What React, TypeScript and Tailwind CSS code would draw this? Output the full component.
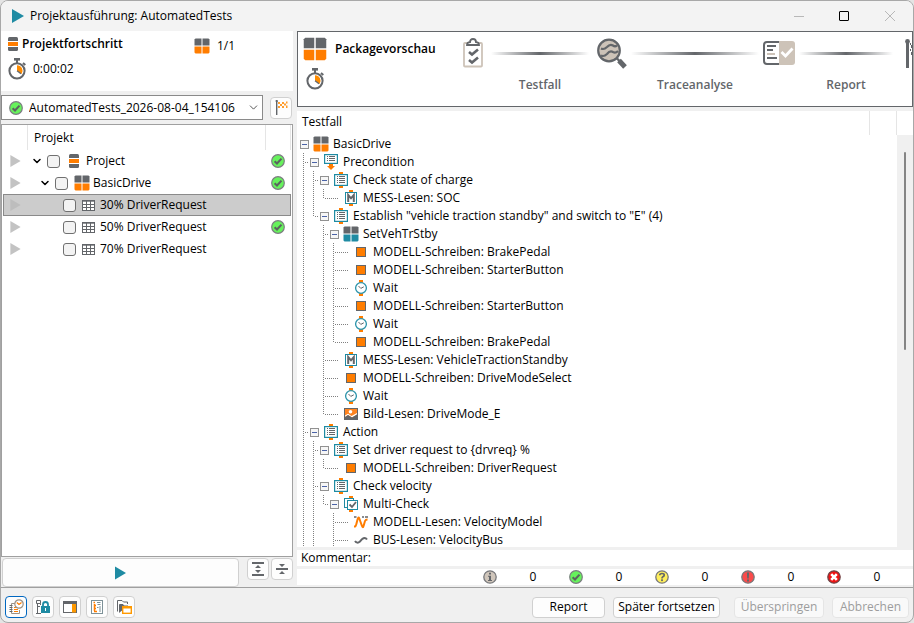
import type { ReactNode } from "react";
import { ChevronDown } from "lucide-react";

function PlayIcon({ className }: { className: string }) {
  return (
    <svg viewBox="0 0 12 14" className={className} fill="currentColor" aria-hidden="true">
      <path d="M0 0L12 7L0 14Z" />
    </svg>
  );
}

function PackageIcon({ className = "size-4", bottom = "#ff7d00" }: { className?: string; bottom?: string }) {
  return (
    <svg viewBox="0 0 16 16" className={`shrink-0 ${className}`} aria-hidden="true">
      <path d="M1.5 0.5H7.5V7.5H0.5V1.5Z" fill="#63666a" />
      <path d="M8.5 0.5H14.5L15.5 1.5V7.5H8.5Z" fill="#63666a" />
      <path d="M0.5 8.5H7.5V15.5H1.5L0.5 14.5Z" fill={bottom} />
      <path d="M8.5 8.5H15.5V14.5L14.5 15.5H8.5Z" fill={bottom} />
    </svg>
  );
}

function ProjectIcon({ className }: { className: string }) {
  return (
    <svg viewBox="0 0 10 14" className={`shrink-0 ${className}`} aria-hidden="true">
      <path d="M0 4V1.5Q0 0 1.5 0H8.5Q10 0 10 1.5V4Z" fill="#63666a" />
      <rect y="5" width="10" height="4" fill="#ff7d00" />
      <path d="M0 10H10V12.5Q10 14 8.5 14H1.5Q0 14 0 12.5Z" fill="#63666a" />
    </svg>
  );
}

function StopwatchIcon() {
  return (
    <svg viewBox="0 0 19 22" className="h-[22px] w-[19px] shrink-0" fill="none" aria-hidden="true">
      <rect x="6" y="0" width="6" height="2.6" fill="#63666a" />
      <path d="M9 2V5M15 5L17.3 7" stroke="#63666a" strokeWidth="2" />
      <circle cx="9" cy="12.8" r="7.6" stroke="#63666a" strokeWidth="2" fill="#fff" />
      <path d="M9 12.8V7.2A5.6 5.6 0 0 1 13.6 16Z" fill="#ff8c00" />
      <path d="M9 12.8L13 15.8" stroke="#63666a" strokeWidth="1.3" />
    </svg>
  );
}

function OkIcon() {
  return (
    <svg viewBox="0 0 14 14" className="size-3.5 shrink-0" fill="none" aria-hidden="true">
      <circle cx="7" cy="7" r="6.3" fill="#66f25c" stroke="#7b7d80" strokeWidth="1.2" />
      <path d="M3.6 7.2L6 9.5L10.5 4.6" stroke="#5b6360" strokeWidth="2.1" />
    </svg>
  );
}

function InfoIcon() {
  return (
    <svg viewBox="0 0 14 14" className="size-3.5 shrink-0" fill="none" aria-hidden="true">
      <circle cx="7" cy="7" r="6.2" fill="#d0c6bb" stroke="#77787b" strokeWidth="1.3" />
      <path d="M6 2.8H8V4.6H6ZM5 5.8H8V10H9V11H5V10H6V6.8H5Z" fill="#63666a" />
    </svg>
  );
}

function QuestionIcon() {
  return (
    <svg viewBox="0 0 14 14" className="size-3.5 shrink-0" fill="none" aria-hidden="true">
      <circle cx="7" cy="7" r="6.2" fill="#ffef5c" stroke="#77787b" strokeWidth="1.3" />
      <path d="M4.7 5.3Q4.8 3.5 7 3.5Q9.3 3.5 9.2 5.2Q9.1 6.3 7.9 6.8Q7 7.3 7 8.4" stroke="#63666a" strokeWidth="1.7" />
      <rect x="6.1" y="9.3" width="1.8" height="1.8" fill="#63666a" />
    </svg>
  );
}

function WarnIcon() {
  return (
    <svg viewBox="0 0 14 14" className="size-3.5 shrink-0" aria-hidden="true">
      <circle cx="7" cy="7" r="6.2" fill="#fa4b4b" stroke="#77787b" strokeWidth="1.3" />
      <path d="M5.9 2.6H8.1L7.8 8.4H6.2ZM6 9.4H8V11.4H6Z" fill="#63666a" />
    </svg>
  );
}

function ErrorIcon() {
  return (
    <svg viewBox="0 0 14 14" className="size-3.5 shrink-0" aria-hidden="true">
      <circle cx="7" cy="7" r="6.2" fill="#f01414" stroke="#6d4547" strokeWidth="1.3" />
      <path d="M4.2 4.2L9.8 9.8M9.8 4.2L4.2 9.8" stroke="#fff" strokeWidth="2.6" />
    </svg>
  );
}

function TableIcon() {
  return (
    <svg viewBox="0 0 13 11" className="mx-[3px] h-[11px] w-[13px] shrink-0" fill="none" aria-hidden="true">
      <rect x="0.5" y="0.5" width="12" height="10" fill="#fff" stroke="#63666a" />
      <path d="M0 1.2H13M0 4.5H13M0 7.5H13M4.5 1V11M8.5 1V11" stroke="#63666a" />
    </svg>
  );
}

function BlockIcon({ first = false }: { first?: boolean }) {
  if (first) {
    return (
      <svg viewBox="0 0 16 16" className="size-4 shrink-0" fill="none" aria-hidden="true">
        <rect x="1.6" y="0.6" width="12.8" height="8.8" fill="#fff" stroke="#1f8ba3" strokeWidth="1.2" />
        <path d="M4 2.5H5M6 2.5H12M4 4.5H5M6 4.5H12M4 6.5H5M6 6.5H12" stroke="#63666a" />
        <path d="M6 10H10V12H12L8 16L4 12H6Z" fill="#ff7d00" />
      </svg>
    );
  }
  return (
    <svg viewBox="0 0 16 16" className="size-4 shrink-0" fill="none" aria-hidden="true">
      <path d="M6 0H10V2H6ZM6 14H10V16H6Z" fill="#ff7d00" />
      <rect x="1.6" y="2.6" width="12.8" height="10.8" fill="#fff" stroke="#1f8ba3" strokeWidth="1.2" />
      <path d="M4 4.5H5M6 4.5H12M4 6.5H5M6 6.5H12M4 8.5H5M6 8.5H12M4 10.5H5M6 10.5H12" stroke="#63666a" />
    </svg>
  );
}

function MeasureIcon() {
  return (
    <svg viewBox="0 0 16 16" className="size-4 shrink-0" fill="none" aria-hidden="true">
      <path d="M6 0H10V2H6ZM6 14H10V16H6Z" fill="#ff7d00" />
      <rect x="2.5" y="2.5" width="11" height="11" fill="#fff" stroke="#1f8ba3" />
      <path d="M5.2 12V5L8 8.3L10.8 5V12" stroke="#63666a" strokeWidth="2" />
    </svg>
  );
}

function WriteIcon() {
  return (
    <svg viewBox="0 0 16 16" className="size-4 shrink-0" aria-hidden="true">
      <rect x="3.5" y="3.5" width="9" height="9" fill="#ff7d00" stroke="#63666a" />
    </svg>
  );
}

function WaitIcon() {
  return (
    <svg viewBox="0 0 16 16" className="size-4 shrink-0" fill="none" aria-hidden="true">
      <path d="M6 0H10V3H6ZM6 13H10V16H6Z" fill="#ff7d00" />
      <circle cx="8" cy="8" r="5.4" fill="#fff" stroke="#2b93aa" strokeWidth="1.3" />
      <path d="M5.5 6L7.8 8.4L10.8 6.8" stroke="#63666a" />
    </svg>
  );
}

function ImageIcon() {
  return (
    <svg viewBox="0 0 16 16" className="size-4 shrink-0" aria-hidden="true">
      <rect x="1.5" y="2.5" width="13" height="11" fill="#ff8420" stroke="#63666a" />
      <circle cx="7.5" cy="5.8" r="1.8" fill="#fff" />
      <path d="M2 9.5L5 7.8L8.5 10L14 7V8.5L9 11.5L5 9L2 11Z" fill="#fff" />
      <path d="M2 11L5 9L9 11.5L14 8.5V13H2Z" fill="#63666a" />
    </svg>
  );
}

function MultiCheckIcon() {
  return (
    <svg viewBox="0 0 16 16" className="size-4 shrink-0" fill="none" aria-hidden="true">
      <path d="M6 0H10V2H6ZM6 14H10V16H6Z" fill="#ff7d00" />
      <rect x="1.5" y="2.5" width="9" height="9" fill="#fff" stroke="#1f8ba3" />
      <rect x="4.5" y="4.5" width="10" height="9" fill="#fff" stroke="#1f8ba3" />
      <path d="M6.5 8.5L9 11L13 6" stroke="#63666a" strokeWidth="1.8" />
    </svg>
  );
}

function ModelReadIcon() {
  return (
    <svg viewBox="0 0 16 16" className="size-4 shrink-0" fill="none" aria-hidden="true">
      <path d="M1 3H3.5M9 3H11M12 3H15" stroke="#63666a" strokeWidth="1.6" />
      <path d="M1 12.5H2.2Q3 12 4 7.5Q5.3 1.5 6.3 4.5L8.8 11.5Q9.9 15 10.7 11.5L12 7Q12.6 5.5 14.5 5.5" stroke="#ff7d00" strokeWidth="2" />
    </svg>
  );
}

function BusReadIcon() {
  return (
    <svg viewBox="0 0 16 16" className="size-4 shrink-0" fill="none" aria-hidden="true">
      <path d="M2 9Q4 12 7 9.5Q9.5 6 11.5 6Q13 6 14 7.5" stroke="#63666a" strokeWidth="2" />
    </svg>
  );
}

function ClipboardIcon() {
  return (
    <svg viewBox="0 0 20 30" className="h-[30px] w-5" fill="none" aria-hidden="true">
      <rect x="1" y="5" width="18" height="23.5" rx="1" fill="#fff" stroke="#cdc3b8" strokeWidth="1.8" />
      <path d="M4 7Q4 4.5 7 4.2Q7 1 10 1Q13 1 13 4.2Q16 4.5 16 7Z" fill="#fff" stroke="#63666a" strokeWidth="1.8" />
      <path d="M6 14L9 16.5L15 11.5M6 22L9 24.5L15 19.5" stroke="#63666a" strokeWidth="2.6" />
    </svg>
  );
}

function TraceIcon() {
  return (
    <svg viewBox="0 0 30 31" className="h-[31px] w-[30px]" fill="none" aria-hidden="true">
      <circle cx="12" cy="12.5" r="10.8" fill="#cdc3b8" stroke="#63666a" strokeWidth="2.2" />
      <path d="M4 10.5Q7 12 10 9Q13 5.5 16 7.5Q18 9 20 7.5M4 17.5Q7 19 10 16Q13 12 16 14Q18.5 15.5 21 13" stroke="#63666a" strokeWidth="2.2" />
      <path d="M19.5 20L22.5 23" stroke="#63666a" strokeWidth="2.4" />
      <path d="M22 22.5L28 29" stroke="#63666a" strokeWidth="5" />
    </svg>
  );
}

function ReportIcon() {
  return (
    <svg viewBox="0 0 32 24" className="h-6 w-8" fill="none" aria-hidden="true">
      <path d="M16 1H4Q1 1 1 4V20Q1 23 4 23H16" fill="#fff" stroke="#63666a" strokeWidth="2" />
      <path d="M16 0H29Q32 0 32 3V21Q32 24 29 24H16Z" fill="#cdc3b8" />
      <path d="M4 5H13M4 9H10M4 17H14" stroke="#63666a" strokeWidth="2" />
      <path d="M4 13H12" stroke="#cdc3b8" strokeWidth="2" />
      <path d="M18.5 11L22.5 15L29.5 7.5" stroke="#fff" strokeWidth="2.8" />
    </svg>
  );
}

function GoalIcon() {
  return (
    <svg viewBox="0 0 7 29" className="h-[29px] w-[7px]" fill="none" aria-hidden="true">
      <rect x="1" y="3" width="3" height="26" fill="#63666a" />
      <circle cx="2.5" cy="2.5" r="2.4" fill="#63666a" />
      <path d="M5.5 4V6M6.5 6V9M5.5 10V12M6.5 13V16" stroke="#63666a" />
    </svg>
  );
}

function FlagIcon() {
  return (
    <svg viewBox="0 0 13 15" className="h-[15px] w-[13px]" aria-hidden="true">
      <rect x="1" y="1" width="1.4" height="14" fill="#63666a" />
      <rect x="0.7" y="0" width="2" height="2" fill="#63666a" />
      <path d="M3 2H5V4H3ZM7 2H9V4H7ZM11 1.5H12.5V3.5H11ZM5 4H7V6H5ZM9 3.5H11V5.5H9ZM3 6H5V8H3ZM7 6H9V8H7ZM11 5.5H12.5V8H11Z" fill="#ff9d2e" />
    </svg>
  );
}

function ExpandAllIcon() {
  return (
    <svg viewBox="0 0 14 14" className="size-3.5" fill="#63666a" aria-hidden="true">
      <path d="M1 0H13V2H1ZM1 12H13V14H1ZM7 3L10 6H4ZM7 11L4 8H10Z" />
    </svg>
  );
}

function CollapseAllIcon() {
  return (
    <svg viewBox="0 0 14 14" className="size-3.5" fill="#63666a" aria-hidden="true">
      <path d="M1 6H13V8H1ZM7 5L4 2H10ZM7 9L10 12H4Z" />
    </svg>
  );
}

const toolIcons: { label: string; active?: boolean; icon: ReactNode }[] = [
  {
    label: "Ausführungsprotokoll",
    active: true,
    icon: (
      <svg viewBox="0 0 16 16" className="size-4" fill="none" aria-hidden="true">
        <path d="M7 4.5H3.5V14.5H11.5V11" stroke="#9b9185" />
        <path d="M1.5 6.5H4.5M1.5 8.5H4.5M1.5 10.5H4.5M1.5 12.5H4.5" stroke="#63666a" />
        <path d="M6 8.5H8M6 10.5H10M6 12.5H10" stroke="#ff7d00" />
        <circle cx="11" cy="5" r="4.2" fill="#fff" stroke="#9b9185" strokeWidth="1.2" />
        <path d="M8.8 3.5L11 5.5L13.5 3.5" stroke="#ff7d00" strokeWidth="1.2" />
      </svg>
    ),
  },
  {
    label: "Sperren",
    icon: (
      <svg viewBox="0 0 16 16" className="size-4" fill="none" aria-hidden="true">
        <path d="M1.5 1.5H5.5V4.5H1.5ZM2.5 4.5V14.5M5.5 4.5V6M2.5 7.5H5M1 14.5H6" stroke="#63666a" />
        <path d="M8 8V5.5Q8 3 10.5 3Q13 3 13 5.5V8" stroke="#1f8ba3" strokeWidth="1.8" />
        <path d="M6 7H15V14H6Z" fill="#1f8ba3" />
        <path d="M10 9H11V12H10Z" fill="#fff" />
      </svg>
    ),
  },
  {
    label: "Seitenleiste",
    icon: (
      <svg viewBox="0 0 16 14" className="h-3.5 w-4" aria-hidden="true">
        <rect x="1.5" y="1.5" width="13" height="11" fill="#fff" stroke="#63666a" />
        <rect x="1" y="1" width="14" height="3" fill="#63666a" />
        <rect x="10" y="4" width="4" height="8.5" fill="#f90" />
      </svg>
    ),
  },
  {
    label: "Testbericht",
    icon: (
      <svg viewBox="0 0 16 16" className="size-4" fill="none" aria-hidden="true">
        <rect x="2.5" y="1.5" width="11" height="13" fill="#fff" stroke="#7d9198" />
        <path d="M4.5 3.5H6M5.5 5V12M6 6.5H7M6 9.5H7M5 12.5H8" stroke="#ff7d00" strokeWidth="1.5" />
        <path d="M8 3.5H11.5M8.5 5.5H11.5M8 8.5H9.5M11 7V13" stroke="#7d9198" />
      </svg>
    ),
  },
  {
    label: "Ordner öffnen",
    icon: (
      <svg viewBox="0 0 16 16" className="size-4" fill="none" aria-hidden="true">
        <path d="M1.5 12.5V1.5H6L7.5 3H11.5V5" stroke="#63666a" />
        <path d="M3.5 13.5V5.5H7L8 7H12" fill="#63666a" stroke="#63666a" />
        <rect x="6.7" y="7.7" width="8.6" height="6.6" fill="#fff" stroke="#f90" strokeWidth="1.4" />
        <path d="M6 8.5H16" stroke="#f90" strokeWidth="2" />
      </svg>
    ),
  },
];

const projectRows = [
  { label: "Project", indent: "pl-[10px]", icon: <ProjectIcon className="mr-[5px] ml-[6px] h-3.5 w-2.5" />, open: true, ok: true },
  { label: "BasicDrive", indent: "pl-[18px]", icon: <PackageIcon className="mr-px ml-[3px] size-4" />, open: true, ok: true },
  { label: "30% DriverRequest", indent: "pl-[26px]", icon: <TableIcon />, ok: false, selected: true },
  { label: "50% DriverRequest", indent: "pl-[26px]", icon: <TableIcon />, ok: true },
  { label: "70% DriverRequest", indent: "pl-[26px]", icon: <TableIcon />, ok: false },
];

// guides holds one character per tree level: "|" passes through, "+" branches off, "L" ends the branch
type Step = { guides: string; icon: ReactNode; label: string; open?: boolean };

const steps: Step[] = [
  { guides: "", icon: <PackageIcon />, label: "BasicDrive", open: true },
  { guides: "+", icon: <BlockIcon first />, label: "Precondition", open: true },
  { guides: "|+", icon: <BlockIcon />, label: "Check state of charge", open: true },
  { guides: "||L", icon: <MeasureIcon />, label: "MESS-Lesen: SOC" },
  { guides: "|L", icon: <BlockIcon />, label: 'Establish "vehicle traction standby" and switch to "E" (4)', open: true },
  { guides: "| +", icon: <PackageIcon bottom="#1f8ba3" />, label: "SetVehTrStby", open: true },
  { guides: "| |+", icon: <WriteIcon />, label: "MODELL-Schreiben: BrakePedal" },
  { guides: "| |+", icon: <WriteIcon />, label: "MODELL-Schreiben: StarterButton" },
  { guides: "| |+", icon: <WaitIcon />, label: "Wait" },
  { guides: "| |+", icon: <WriteIcon />, label: "MODELL-Schreiben: StarterButton" },
  { guides: "| |+", icon: <WaitIcon />, label: "Wait" },
  { guides: "| |L", icon: <WriteIcon />, label: "MODELL-Schreiben: BrakePedal" },
  { guides: "| +", icon: <MeasureIcon />, label: "MESS-Lesen: VehicleTractionStandby" },
  { guides: "| +", icon: <WriteIcon />, label: "MODELL-Schreiben: DriveModeSelect" },
  { guides: "| +", icon: <WaitIcon />, label: "Wait" },
  { guides: "| L", icon: <ImageIcon />, label: "Bild-Lesen: DriveMode_E" },
  { guides: "+", icon: <BlockIcon />, label: "Action", open: true },
  { guides: "|+", icon: <BlockIcon />, label: "Set driver request to {drvreq} %", open: true },
  { guides: "||L", icon: <WriteIcon />, label: "MODELL-Schreiben: DriverRequest" },
  { guides: "|+", icon: <BlockIcon />, label: "Check velocity", open: true },
  { guides: "||L", icon: <MultiCheckIcon />, label: "Multi-Check", open: true },
  { guides: "|| +", icon: <ModelReadIcon />, label: "MODELL-Lesen: VelocityModel" },
  { guides: "|| +", icon: <BusReadIcon />, label: "BUS-Lesen: VelocityBus" },
];

const counters = [
  { label: "Info", icon: <InfoIcon /> },
  { label: "Erfolgreich", icon: <OkIcon /> },
  { label: "Unklar", icon: <QuestionIcon /> },
  { label: "Fehlgeschlagen", icon: <WarnIcon /> },
  { label: "Fehler", icon: <ErrorIcon /> },
];

const guidePaths: Record<string, string> = {
  " ": "",
  "|": "M4.5 0V18",
  "+": "M4.5 0V18M6 9.5H10",
  L: "M4.5 0V10M6 9.5H10",
};

function Guide({ kind }: { kind: string }) {
  return (
    <svg viewBox="0 0 10 18" className="h-[18px] w-2.5 shrink-0" fill="none" aria-hidden="true">
      <path d={guidePaths[kind]} stroke="#808080" strokeDasharray="1 1" />
    </svg>
  );
}

function StepRow({ step }: { step: Step }) {
  return (
    <li className="flex h-[18px] items-center leading-3 whitespace-nowrap">
      {step.guides.split("").map((kind, i) => (
        <Guide key={i} kind={kind} />
      ))}
      <span className="flex h-full w-3.5 shrink-0">
        {step.open ? (
          <button
            aria-label={`${step.label} einklappen`}
            className="mt-[5px] ml-px flex size-[9px] items-center justify-center border border-[#919191] bg-[#f6f6f6]"
          >
            <span className="h-px w-[5px] bg-[#4b63a7]" />
          </button>
        ) : (
          <svg viewBox="0 0 10 18" className="h-[18px] w-2.5 shrink-0" aria-hidden="true">
            <path d="M0 9.5H10" stroke="#808080" strokeDasharray="1 1" />
          </svg>
        )}
      </span>
      {step.icon}
      <span className="pl-1">{step.label}</span>
    </li>
  );
}

function IconButton({ label, active, children }: { label: string; active?: boolean; children: ReactNode }) {
  return (
    <button
      aria-label={label}
      className={`flex size-[22px] shrink-0 items-center justify-center rounded-[4px] border bg-[#fdfdfd] ${
        active ? "border-[#0067c0]" : "border-[#d0d0d0]"
      }`}
    >
      {children}
    </button>
  );
}

function Connector() {
  return (
    <span className="mx-1 h-[3px] flex-1 bg-gradient-to-r from-transparent from-0% via-[#63666a] via-50% to-transparent to-100%" />
  );
}

export default function App() {
  return (
    <div className="h-screen bg-[#e4e4e4] font-['Open_Sans','Noto_Sans',sans-serif] text-xs leading-4 text-black">
      <div className="flex h-full flex-col overflow-hidden rounded-lg border border-[#a8a8a8] bg-[#f0f0f0]">
        <header className="flex h-[30px] shrink-0 items-center bg-[#f3f3f3] pl-[11px]">
          <PlayIcon className="h-3.5 w-3 text-[#1f8ba3]" />
          <h1 className="flex-1 pl-1.5">Projektausführung: AutomatedTests</h1>
          <button aria-label="Minimieren" className="flex h-full w-[45px] items-center justify-center">
            <span className="h-px w-2.5 bg-[#b8b8b8]" />
          </button>
          <button aria-label="Maximieren" className="flex h-full w-[45px] items-center justify-center">
            <span className="size-2.5 rounded-[1px] border border-black" />
          </button>
          <button aria-label="Schließen" className="flex h-full w-[47px] items-center justify-center">
            <svg viewBox="0 0 10 10" className="size-2.5" stroke="#b8b8b8" aria-hidden="true">
              <path d="M0 0L10 10M10 0L0 10" />
            </svg>
          </button>
        </header>

        <div className="flex min-h-0 flex-1">
          <aside className="flex w-[292px] shrink-0 flex-col">
            <section className="h-[60px] shrink-0 bg-white pl-[7px]">
              <div className="flex h-[25px] items-center">
                <ProjectIcon className="h-3.5 w-2.5" />
                <h2 className="w-[176px] pl-1 font-semibold">Projektfortschritt</h2>
                <div className="flex items-center pt-1">
                  <PackageIcon />
                  <span className="pl-[7px]">1/1</span>
                </div>
              </div>
              <div className="flex h-[26px] items-center">
                <StopwatchIcon />
                <span className="pl-1.5">0:00:02</span>
              </div>
            </section>

            <div className="flex shrink-0 items-center gap-[7px] py-1">
              <div className="relative flex h-[25px] flex-1 items-center border border-[#8a8a8a] bg-white pl-[7px]">
                <OkIcon />
                <select aria-label="Testlauf" className="h-full flex-1 appearance-none bg-transparent pl-1.5 outline-none">
                  <option>AutomatedTests_2026-08-04_154106</option>
                </select>
                <ChevronDown size={13} strokeWidth={1.5} className="pointer-events-none absolute right-[2px] text-[#333]" />
              </div>
              <span className="pr-px">
                <IconButton label="Zum Ergebnis">
                  <FlagIcon />
                </IconButton>
              </span>
            </div>

            <div className="flex min-h-0 flex-1 flex-col border border-[#a0a0a0] bg-white">
              <div className="flex h-[25px] shrink-0 items-center pr-px">
                <span className="h-full w-[26px] border-r border-[#e5e5e5]" />
                <span className="flex-1 pl-1.5">Projekt</span>
                <span className="h-full w-[26px] border-x border-[#e5e5e5]" />
              </div>
              <ul>
                {projectRows.map((row) => (
                  <li
                    key={row.label}
                    className={`mx-px flex h-[22px] items-center border pr-[5px] pl-1.5 ${
                      row.selected ? "border-[#8a8a8a] bg-[#cccccc]" : "border-transparent"
                    }`}
                  >
                    <PlayIcon className={`h-3 w-[11px] ${row.selected ? "text-[#bdbdbd]" : "text-[#c3c3c3]"}`} />
                    <span className={`flex items-center ${row.indent}`}>
                      {row.open ? (
                        <button aria-label={`${row.label} einklappen`} className="w-4">
                          <ChevronDown size={12} strokeWidth={3} />
                        </button>
                      ) : (
                        <span className="w-4" />
                      )}
                    </span>
                    <label className="flex flex-1 items-center">
                      <input
                        type="checkbox"
                        className="mr-[3px] size-[13px] shrink-0 appearance-none rounded-[3px] border border-[#707070] bg-[#f3f3f3]"
                      />
                      {row.icon}
                      <span className="pl-0.5">{row.label}</span>
                    </label>
                    {row.ok && <OkIcon />}
                  </li>
                ))}
              </ul>
            </div>

            <div className="flex shrink-0 gap-0.5 pt-px">
              <button
                aria-label="Starten"
                className="mr-1.5 ml-px flex h-[29px] flex-1 items-center justify-center rounded-[4px] border border-[#d0d0d0] bg-[#fdfdfd]"
              >
                <PlayIcon className="h-3.5 w-[11px] text-[#1f8ba3]" />
              </button>
              <IconButton label="Alle aufklappen">
                <ExpandAllIcon />
              </IconButton>
              <IconButton label="Alle einklappen">
                <CollapseAllIcon />
              </IconButton>
            </div>
          </aside>

          <main className="ml-1 flex min-w-0 flex-1 flex-col">
            <section className="flex h-[76px] shrink-0 overflow-hidden border border-[#63666a] bg-white">
              <div className="w-[165px] shrink-0 pt-[5px] pl-[5px]">
                <div className="flex items-center">
                  <PackageIcon className="size-6" />
                  <h2 className="pl-2 font-semibold">Packagevorschau</h2>
                </div>
                <div className="pt-[7px] pl-[3px]">
                  <StopwatchIcon />
                </div>
              </div>
              <div className="grid flex-1 grid-cols-[20px_114fr_30px_136fr_32px_110fr_7px] grid-rows-[42px_22px] items-center font-semibold text-[#63666a]">
                <ClipboardIcon />
                <div className="flex px-1"><Connector /></div>
                <TraceIcon />
                <div className="flex"><Connector /></div>
                <ReportIcon />
                <div className="flex pr-2"><Connector /></div>
                <GoalIcon />
                <span className="col-start-2 text-center">Testfall</span>
                <span className="col-start-4 text-center">Traceanalyse</span>
                <span className="col-start-6 pr-2 text-center">Report</span>
              </div>
            </section>

            <section className="mt-1 flex min-h-0 flex-1 flex-col bg-white">
              <div className="flex h-6 shrink-0">
                <h3 className="flex-1 self-center pb-0.5 pl-[5px]">Testfall</h3>
                <span className="w-7 border-x border-[#e5e5e5]" />
                <span className="w-4" />
              </div>
              <div className="flex min-h-0 flex-1">
                <ul className="min-w-0 flex-1 overflow-hidden pl-0.5">
                  {steps.map((step, i) => (
                    <StepRow key={i} step={step} />
                  ))}
                </ul>
                <div className="w-4 shrink-0 bg-[#f0f0f0] pt-[17px] pl-[7px]">
                  <div className="h-1/2 w-0.5 rounded-full bg-[#858585]" />
                </div>
              </div>
            </section>

            <div className="mt-[3px] h-4 shrink-0 bg-white pl-1">Kommentar:</div>
            <div className="mt-[3px] mb-0.5 flex h-4 shrink-0 items-center justify-end bg-white">
              {counters.map((counter) => (
                <div key={counter.label} className="flex w-[86px] items-center" aria-label={counter.label}>
                  {counter.icon}
                  <span className="w-[72px] text-center">0</span>
                </div>
              ))}
            </div>
          </main>
        </div>

        <footer className="flex h-[35px] shrink-0 items-center gap-[5px] border-t border-[#a0a0a0] pt-1 pr-1 pl-1">
          {toolIcons.map((tool) => (
            <IconButton key={tool.label} label={tool.label} active={tool.active}>
              {tool.icon}
            </IconButton>
          ))}
          <div className="ml-auto flex">
            <button className="h-[21px] w-[73px] rounded-[4px] border border-[#d0d0d0] bg-[#fdfdfd]">Report</button>
            <button className="ml-2 h-[21px] w-[107px] rounded-[4px] border border-[#d0d0d0] bg-[#fdfdfd]">
              Später fortsetzen
            </button>
            <button
              disabled
              className="ml-3.5 h-[21px] w-[90px] rounded-[4px] border border-[#e5e5e5] bg-[#f9f9f9] text-[#9d9d9d]"
            >
              Überspringen
            </button>
            <button
              disabled
              className="ml-2 h-[21px] w-[77px] rounded-[4px] border border-[#e5e5e5] bg-[#f9f9f9] text-[#9d9d9d]"
            >
              Abbrechen
            </button>
          </div>
        </footer>
      </div>
    </div>
  );
}
